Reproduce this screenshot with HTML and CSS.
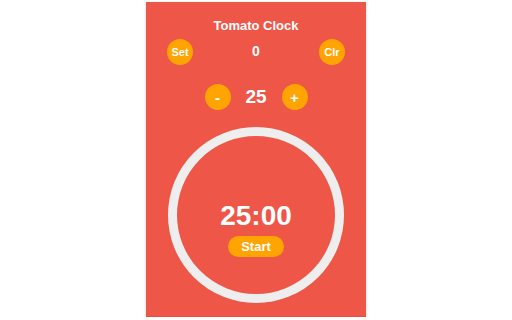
FILE: index.html
```html
<!DOCTYPE html>
<html lang="en">
<head>
    <meta charset="UTF-8">
    <title>Tomato Clock</title>
    <link rel="stylesheet" href="styles.css">
</head>
<body>
    <div class="panel">
        <h1 class="title">Tomato Clock</h1>
        <div class="count-row">
            <button class="round-btn small">Set</button>
            <span class="count">0</span>
            <button class="round-btn small">Clr</button>
        </div>
        <div class="length-row">
            <button class="round-btn">-</button>
            <span class="minutes">25</span>
            <button class="round-btn">+</button>
        </div>
        <div class="ring">
            <div class="time">25:00</div>
            <button class="start-btn">Start</button>
        </div>
    </div>
</body>
</html>
```

FILE: styles.css
```css
body {
    margin: 0;
    font-family: "Liberation Sans", Arial, sans-serif;
    background-color: #fff;
}
.panel {
    width: 220px;
    height: 315px;
    margin: 2px auto 0;
    background-color: #ee5647;
    box-shadow: 0 1px 3px rgba(0, 0, 0, 0.2);
    border-bottom: 1px solid #f24a3a;
    box-sizing: border-box;
    padding-top: 16px;
    color: #fff;
}
.title {
    margin: 0;
    font-size: 13px;
    line-height: 15px;
    text-align: center;
    font-weight: bold;
}
.count-row {
    display: flex;
    align-items: center;
    justify-content: space-between;
    padding: 0 21px;
    margin-top: 6px;
}
.count {
    font-size: 14px;
    font-weight: bold;
    margin-top: -2px;
}
.length-row {
    display: flex;
    align-items: center;
    justify-content: center;
    gap: 13px;
    margin-top: 19px;
}
.minutes {
    font-size: 19px;
    font-weight: bold;
    min-width: 25px;
    text-align: center;
}
.round-btn {
    width: 26px;
    height: 26px;
    border: none;
    border-radius: 50%;
    padding: 0;
    background-color: #ffa400;
    color: #fff;
    font-family: inherit;
    font-size: 15px;
    font-weight: bold;
}
.round-btn.small {
    font-size: 11px;
}
.ring {
    width: 176px;
    height: 176px;
    margin: 17px auto 0;
    box-sizing: border-box;
    border: 9px solid #eeeeee;
    border-radius: 50%;
    display: flex;
    flex-direction: column;
    align-items: center;
    padding-top: 64px;
}
.time {
    font-size: 28px;
    line-height: 32px;
    font-weight: bold;
}
.start-btn {
    margin-top: 4px;
    width: 56px;
    height: 21px;
    border: none;
    border-radius: 11px;
    padding: 0;
    background-color: #ffa400;
    color: #fff;
    font-family: inherit;
    font-size: 13px;
    font-weight: bold;
}
```
